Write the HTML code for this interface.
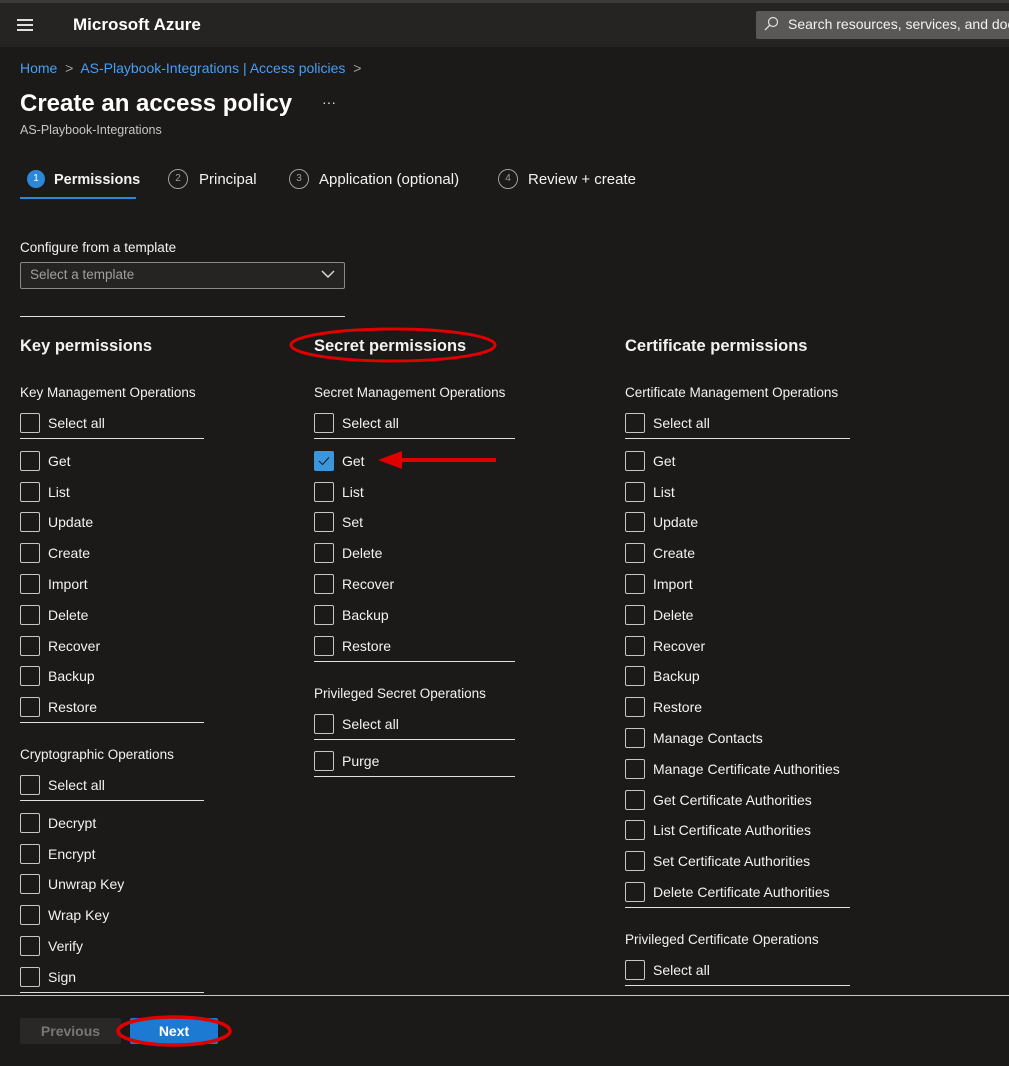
<!DOCTYPE html>
<html><head><meta charset="utf-8"><style>
*{margin:0;padding:0;box-sizing:border-box}
body{width:1009px;height:1066px;background:#1b1a19;font-family:"Liberation Sans",sans-serif;color:#f3f2f1;position:relative;overflow:hidden;font-size:14px}
.a{position:absolute;white-space:nowrap}
.cb{position:absolute;width:20px;height:20px;border:1px solid #c8c6c4;border-radius:2px}
.l{position:absolute;height:18px;line-height:18px;font-size:14px;white-space:nowrap;color:#f3f2f1}
.ln{position:absolute;height:1px;background:#e1dfdd}
.h{position:absolute;font-size:16.5px;font-weight:bold;line-height:20px;white-space:nowrap}
.g{position:absolute;font-size:13.5px;line-height:18px;white-space:nowrap}
</style></head><body>
<div class="a" style="left:0;top:0;width:1009px;height:3px;background:#3b3a39"></div>
<div class="a" style="left:0;top:3px;width:1009px;height:44px;background:#252423"></div>
<div class="a" style="left:17px;top:19px;width:16px;height:1.5px;background:#e1dfdd"></div>
<div class="a" style="left:17px;top:24px;width:16px;height:1.5px;background:#e1dfdd"></div>
<div class="a" style="left:17px;top:29px;width:16px;height:1.5px;background:#e1dfdd"></div>
<div class="a" style="left:73px;top:15px;font-size:17px;font-weight:bold;line-height:20px;color:#fff">Microsoft Azure</div>
<div class="a" style="left:756px;top:11px;width:260px;height:28px;background:#595857;border-radius:2px"></div>
<svg class="a" style="left:763px;top:16px" width="16" height="16" viewBox="0 0 16 16"><circle cx="10" cy="6" r="4.5" fill="none" stroke="#e1dfdd" stroke-width="1.2"/><path d="M6.8 9.2 L2 14" stroke="#e1dfdd" stroke-width="1.3"/></svg>
<div class="a" style="left:788px;top:15px;font-size:14px;line-height:18px;color:#f3f2f1">Search resources, services, and docs</div>

<div class="a" style="left:20px;top:59px;font-size:14px;line-height:18px;color:#479ef5">Home &nbsp;<span style="color:#a19f9d">&gt;</span>&nbsp; AS-Playbook-Integrations | Access policies &nbsp;<span style="color:#a19f9d">&gt;</span></div>
<div class="a" style="left:20px;top:89px;font-size:24px;font-weight:bold;line-height:30px;color:#fff">Create an access policy</div>
<div class="a" style="left:322px;top:94px;font-size:14px;color:#e1dfdd">···</div>
<div class="a" style="left:20px;top:122px;font-size:12.5px;line-height:16px;color:#c8c6c4">AS-Playbook-Integrations</div>

<div class="a" style="left:27px;top:170px;width:18px;height:18px;border-radius:50%;background:#2b88d8;color:#fff;font-size:10px;line-height:18px;text-align:center">1</div>
<div class="a" style="left:54px;top:171px;font-size:14.5px;font-weight:bold;line-height:18px">Permissions</div>
<div class="a" style="left:20px;top:197px;width:116px;height:2px;background:#2b88d8"></div>
<div class="a" style="left:168px;top:169px;width:20px;height:20px;border-radius:50%;border:1px solid #a19f9d;color:#a19f9d;font-size:10px;line-height:18px;text-align:center">2</div>
<div class="a" style="left:199px;top:171px;font-size:15px;line-height:18px">Principal</div>
<div class="a" style="left:289px;top:169px;width:20px;height:20px;border-radius:50%;border:1px solid #a19f9d;color:#a19f9d;font-size:10px;line-height:18px;text-align:center">3</div>
<div class="a" style="left:319px;top:171px;font-size:15px;line-height:18px">Application (optional)</div>
<div class="a" style="left:498px;top:169px;width:20px;height:20px;border-radius:50%;border:1px solid #a19f9d;color:#a19f9d;font-size:10px;line-height:18px;text-align:center">4</div>
<div class="a" style="left:528px;top:171px;font-size:15px;line-height:18px">Review + create</div>

<div class="g" style="left:20px;top:239px">Configure from a template</div>
<div class="a" style="left:20px;top:262px;width:325px;height:27px;border:1px solid #8a8886;border-radius:2px;background:#252423"></div>
<div class="g" style="left:30px;top:266px;color:#a19f9d">Select a template</div>
<svg class="a" style="left:321px;top:269px" width="14" height="10" viewBox="0 0 14 10"><path d="M1 2 L7 8 L13 2" fill="none" stroke="#e1dfdd" stroke-width="1.4"/></svg>
<div class="ln" style="left:20px;top:316px;width:325px"></div>

<div class="h" style="left:20px;top:336px">Key permissions</div>
<div class="h" style="left:314px;top:336px">Secret permissions</div>
<div class="h" style="left:625px;top:336px">Certificate permissions</div>

<!-- Key column -->
<div class="g" style="left:20px;top:384px">Key Management Operations</div>
<div class="cb" style="left:20px;top:413px"></div><div class="l" style="left:48px;top:414px">Select all</div>
<div class="ln" style="left:20px;top:438px;width:184px"></div>
<div class="cb" style="left:20px;top:451px"></div><div class="l" style="left:48px;top:452px">Get</div>
<div class="cb" style="left:20px;top:482px"></div><div class="l" style="left:48px;top:483px">List</div>
<div class="cb" style="left:20px;top:512px"></div><div class="l" style="left:48px;top:513px">Update</div>
<div class="cb" style="left:20px;top:543px"></div><div class="l" style="left:48px;top:544px">Create</div>
<div class="cb" style="left:20px;top:574px"></div><div class="l" style="left:48px;top:575px">Import</div>
<div class="cb" style="left:20px;top:605px"></div><div class="l" style="left:48px;top:606px">Delete</div>
<div class="cb" style="left:20px;top:636px"></div><div class="l" style="left:48px;top:637px">Recover</div>
<div class="cb" style="left:20px;top:666px"></div><div class="l" style="left:48px;top:667px">Backup</div>
<div class="cb" style="left:20px;top:697px"></div><div class="l" style="left:48px;top:698px">Restore</div>
<div class="ln" style="left:20px;top:722px;width:184px"></div>
<div class="g" style="left:20px;top:746px">Cryptographic Operations</div>
<div class="cb" style="left:20px;top:775px"></div><div class="l" style="left:48px;top:776px">Select all</div>
<div class="ln" style="left:20px;top:800px;width:184px"></div>
<div class="cb" style="left:20px;top:813px"></div><div class="l" style="left:48px;top:814px">Decrypt</div>
<div class="cb" style="left:20px;top:844px"></div><div class="l" style="left:48px;top:845px">Encrypt</div>
<div class="cb" style="left:20px;top:874px"></div><div class="l" style="left:48px;top:875px">Unwrap Key</div>
<div class="cb" style="left:20px;top:905px"></div><div class="l" style="left:48px;top:906px">Wrap Key</div>
<div class="cb" style="left:20px;top:936px"></div><div class="l" style="left:48px;top:937px">Verify</div>
<div class="cb" style="left:20px;top:967px"></div><div class="l" style="left:48px;top:968px">Sign</div>
<div class="ln" style="left:20px;top:992px;width:184px"></div>

<!-- Secret column -->
<div class="g" style="left:314px;top:384px">Secret Management Operations</div>
<div class="cb" style="left:314px;top:413px"></div><div class="l" style="left:342px;top:414px">Select all</div>
<div class="ln" style="left:314px;top:438px;width:201px"></div>
<div class="cb" style="left:314px;top:451px;background:#3a96dd;border-color:#3a96dd"></div>
<svg class="a" style="left:318px;top:456px" width="12" height="10" viewBox="0 0 12 10"><path d="M1 5 L4.5 8.5 L11 1.5" fill="none" stroke="#1b1a19" stroke-width="1"/></svg>
<div class="l" style="left:342px;top:452px">Get</div>
<div class="cb" style="left:314px;top:482px"></div><div class="l" style="left:342px;top:483px">List</div>
<div class="cb" style="left:314px;top:512px"></div><div class="l" style="left:342px;top:513px">Set</div>
<div class="cb" style="left:314px;top:543px"></div><div class="l" style="left:342px;top:544px">Delete</div>
<div class="cb" style="left:314px;top:574px"></div><div class="l" style="left:342px;top:575px">Recover</div>
<div class="cb" style="left:314px;top:605px"></div><div class="l" style="left:342px;top:606px">Backup</div>
<div class="cb" style="left:314px;top:636px"></div><div class="l" style="left:342px;top:637px">Restore</div>
<div class="ln" style="left:314px;top:661px;width:201px"></div>
<div class="g" style="left:314px;top:685px">Privileged Secret Operations</div>
<div class="cb" style="left:314px;top:714px"></div><div class="l" style="left:342px;top:715px">Select all</div>
<div class="ln" style="left:314px;top:739px;width:201px"></div>
<div class="cb" style="left:314px;top:751px"></div><div class="l" style="left:342px;top:752px">Purge</div>
<div class="ln" style="left:314px;top:776px;width:201px"></div>

<!-- Cert column -->
<div class="g" style="left:625px;top:384px">Certificate Management Operations</div>
<div class="cb" style="left:625px;top:413px"></div><div class="l" style="left:653px;top:414px">Select all</div>
<div class="ln" style="left:625px;top:438px;width:225px"></div>
<div class="cb" style="left:625px;top:451px"></div><div class="l" style="left:653px;top:452px">Get</div>
<div class="cb" style="left:625px;top:482px"></div><div class="l" style="left:653px;top:483px">List</div>
<div class="cb" style="left:625px;top:512px"></div><div class="l" style="left:653px;top:513px">Update</div>
<div class="cb" style="left:625px;top:543px"></div><div class="l" style="left:653px;top:544px">Create</div>
<div class="cb" style="left:625px;top:574px"></div><div class="l" style="left:653px;top:575px">Import</div>
<div class="cb" style="left:625px;top:605px"></div><div class="l" style="left:653px;top:606px">Delete</div>
<div class="cb" style="left:625px;top:636px"></div><div class="l" style="left:653px;top:637px">Recover</div>
<div class="cb" style="left:625px;top:666px"></div><div class="l" style="left:653px;top:667px">Backup</div>
<div class="cb" style="left:625px;top:697px"></div><div class="l" style="left:653px;top:698px">Restore</div>
<div class="cb" style="left:625px;top:728px"></div><div class="l" style="left:653px;top:729px">Manage Contacts</div>
<div class="cb" style="left:625px;top:759px"></div><div class="l" style="left:653px;top:760px">Manage Certificate Authorities</div>
<div class="cb" style="left:625px;top:790px"></div><div class="l" style="left:653px;top:791px">Get Certificate Authorities</div>
<div class="cb" style="left:625px;top:820px"></div><div class="l" style="left:653px;top:821px">List Certificate Authorities</div>
<div class="cb" style="left:625px;top:851px"></div><div class="l" style="left:653px;top:852px">Set Certificate Authorities</div>
<div class="cb" style="left:625px;top:882px"></div><div class="l" style="left:653px;top:883px">Delete Certificate Authorities</div>
<div class="ln" style="left:625px;top:907px;width:225px"></div>
<div class="g" style="left:625px;top:931px">Privileged Certificate Operations</div>
<div class="cb" style="left:625px;top:960px"></div><div class="l" style="left:653px;top:961px">Select all</div>
<div class="ln" style="left:625px;top:985px;width:225px"></div>

<!-- footer -->
<div class="a" style="left:0;top:995px;width:1009px;height:71px;background:#1b1a19;border-top:1px solid #c8c6c4"></div>
<div class="a" style="left:20px;top:1018px;width:101px;height:26px;background:#292827;border-radius:2px;color:#797775;font-size:14px;font-weight:bold;line-height:26px;text-align:center">Previous</div>
<div class="a" style="left:130px;top:1018px;width:88px;height:26px;background:#1d7ad3;border-radius:2px;color:#fff;font-size:14px;font-weight:bold;line-height:26px;text-align:center">Next</div>

<!-- annotations -->
<svg class="a" style="left:0;top:0" width="1009" height="1066" viewBox="0 0 1009 1066">
<ellipse cx="393" cy="345" rx="102" ry="16" fill="none" stroke="#e00000" stroke-width="3"/>
<ellipse cx="174" cy="1031" rx="56" ry="14" fill="none" stroke="#e00000" stroke-width="3.5"/>
<path d="M400 460 L496 460" stroke="#e00000" stroke-width="4"/>
<path d="M378 460 L402 451 L402 469 Z" fill="#e00000"/>
</svg>
</body></html>
